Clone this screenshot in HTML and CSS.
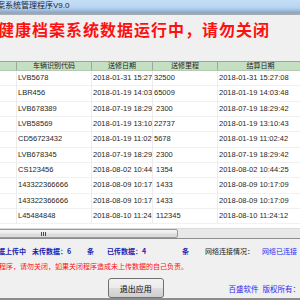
FILE: index.html
```html
<!DOCTYPE html>
<html lang="zh-CN">
<head>
    <meta charset="UTF-8">
    <title>健康档案系统管理程序V9.0</title>
    <link rel="stylesheet" href="styles.css">
</head>
<body>
    <div class="window">
        <div class="titlebar"><span>案系统管理程序V9.0</span></div>

        <div class="banner">健康档案系统数据运行中，请勿关闭</div>

        <div class="grid">
            <div class="grid-head">
                <div class="head-cell"></div>
                <div class="head-cell">车辆识别代码</div>
                <div class="head-cell">送修日期</div>
                <div class="head-cell">送修里程</div>
                <div class="head-cell">结算日期</div>
            </div>
            <div class="grid-body">
                <!-- rows inserted by script -->
            </div>
            <div class="hscroll">
                <div class="thumb"><span class="grip"></span></div>
            </div>
        </div>

        <div class="panel">
            <div class="status">
                <span>数据上传中</span>
                <span>未传数据：6</span>
                <span>条</span>
                <span>已传数据：4</span>
                <span>条</span>
                <span class="net-label">网络连接情况：</span>
                <span class="net-state">网络已连接</span>
            </div>
            <div class="warning">程序，请勿关闭，如果关闭程序造成未上传数据的自己负责。</div>
            <div class="actions">
                <button class="exit-btn">退出应用</button>
                <div class="footer">
                    <span>百盛软件</span>
                    <span>版权所有：</span>
                </div>
            </div>
        </div>
    </div>

    <script>
        document.addEventListener('DOMContentLoaded', () => {
            const records = [
                ['LVB5678', '2018-01-31 15:27:08', '32500', '2018-01-31 15:27:08'],
                ['LBR456', '2018-01-19 14:03:48', '65009', '2018-01-19 14:03:48'],
                ['LVB678389', '2018-07-19 18:29:42', ' 2300', '2018-07-19 18:29:42'],
                ['LVB58569', '2018-01-19 13:10:43', '22737', '2018-01-19 13:10:43'],
                ['CD56723432', '2018-01-19 11:02:42', '5678', '2018-01-19 11:02:42'],
                ['LVB678345', '2018-07-19 18:29:42', ' 2300', '2018-07-19 18:29:42'],
                ['CS123456', '2018-08-02 10:44:25', ' 1354', '2018-08-02 10:44:25'],
                ['143322366666', '2018-08-09 10:17:09', ' 1433', '2018-08-09 10:17:09'],
                ['143322366666', '2018-08-09 10:17:09', ' 1433', '2018-08-09 10:17:09'],
                ['L45484848', '2018-08-10 11:24:12', ' 112345', '2018-08-10 11:24:12']
            ];

            const body = document.querySelector('.grid-body');

            // Render grid rows
            body.innerHTML = records.map(r => `
                <div class="grid-row">
                    <div class="cell"></div>
                    <div class="cell">${r[0]}</div>
                    <div class="cell">${r[1]}</div>
                    <div class="cell">${r[2]}</div>
                    <div class="cell">${r[3]}</div>
                </div>
            `).join('');
        });
    </script>
</body>
</html>
```

FILE: styles.css
```css
:root {
    --panel: #f0f0f0;
    --blue: #1c1cb0;
    --link: #2b2bf5;
    --red: #ff1010;
    --head: #c4dfc1;
}

* {
    box-sizing: border-box;
}

body {
    margin: 0;
    width: 300px;
    height: 300px;
    overflow: hidden;
    background: var(--panel);
    font-family: 'Liberation Sans', 'Noto Sans CJK SC', sans-serif;
}

.window {
    width: 300px;
    height: 300px;
    display: flex;
    flex-direction: column;
    overflow: hidden;
    border-bottom: 2px solid #8c8c8c;
}

.titlebar {
    flex: none;
    height: 15px;
    background: linear-gradient(#c4def7 0%, #b8d6f4 50%, #a6c4e4 70%, #90a9c6 86%, #9ca6b2 100%);
    border-bottom: 1px solid #a9aeb4;
    font-size: 8px;
    line-height: 12px;
    color: #1b2533;
    white-space: nowrap;
    text-indent: -3px;
}

.banner {
    flex: none;
    height: 46px;
    padding-top: 6px;
    color: var(--red);
    font-family: 'Noto Sans CJK SC', sans-serif;
    font-weight: bold;
    font-size: 16px;
    line-height: 16px;
    letter-spacing: 1px;
    white-space: nowrap;
    text-indent: -2px;
}

.grid {
    flex: none;
    background: #fff;
    border-top: 1px solid #a0a0a0;
}

.grid-head,
.grid-row {
    display: grid;
    grid-template-columns: 17px 75px 61px 65px 86px;
}

.grid-head {
    height: 9px;
    background: var(--head);
    border-bottom: 1px solid #b3c9b1;
}

.head-cell {
    border-right: 1px solid #9fa89e;
    font-size: 7px;
    line-height: 8px;
    text-align: center;
    color: #1e1e1e;
    white-space: nowrap;
    overflow: hidden;
}

.grid-body {
    height: 157px;
    overflow: hidden;
}

.grid-row {
    height: 15.33px;
}

.cell {
    border-right: 1px solid #ececec;
    border-bottom: 1px solid #f1f1f1;
    padding-left: 1px;
    font-size: 7.5px;
    line-height: 13px;
    color: #262626;
    white-space: pre;
    overflow: hidden;
}

.hscroll {
    height: 11px;
    display: flex;
    overflow: hidden;
    background: #e8e8e8;
    border-top: 1px solid #dcdcdc;
    border-bottom: 1px solid #8d8d8d;
}

.thumb {
    flex: none;
    width: 270px;
    margin-left: -92px;
    border: 1px solid #989898;
    border-radius: 2px;
    background: linear-gradient(#f5f5f5 0%, #e9e9e9 50%, #dadada 51%, #dedede 100%);
    display: flex;
    align-items: center;
    justify-content: center;
}

.grip {
    width: 5px;
    height: 4px;
    background: repeating-linear-gradient(to right, #4a4a4a 0 1px, transparent 1px 2px);
}

.panel {
    flex: 1;
    overflow: hidden;
}

.status {
    display: grid;
    grid-template-columns: 41px 55px 20px 75px 23px 57px auto;
    margin-top: 7px;
    margin-left: -9px;
    font-family: 'Noto Sans CJK SC', sans-serif;
    font-weight: bold;
    font-size: 7px;
    line-height: 10px;
    color: var(--blue);
    white-space: nowrap;
}

.net-label {
    color: #1a1a1a;
    font-weight: normal;
}

.net-state {
    color: var(--link);
    font-weight: normal;
}

.warning {
    margin-top: 5px;
    font-family: 'Noto Sans CJK SC', sans-serif;
    font-size: 7px;
    line-height: 10px;
    color: var(--red);
    white-space: nowrap;
    text-indent: -1px;
}

.actions {
    display: flex;
    align-items: center;
    margin-top: 7px;
    height: 20px;
}

.exit-btn {
    margin: 0 0 0 108px;
    width: 59px;
    height: 20px;
    padding: 0;
    border: 1px solid #707070;
    border-radius: 3px;
    background: linear-gradient(#f2f2f2 0%, #ebebeb 50%, #dddddd 51%, #cfcfcf 100%);
    font-family: 'Noto Sans CJK SC', sans-serif;
    font-size: 8px;
    color: #000;
}

.footer {
    display: flex;
    gap: 4px;
    margin-left: 65px;
    font-family: 'Noto Sans CJK SC', sans-serif;
    font-size: 7.5px;
    color: var(--link);
    white-space: nowrap;
}
```
